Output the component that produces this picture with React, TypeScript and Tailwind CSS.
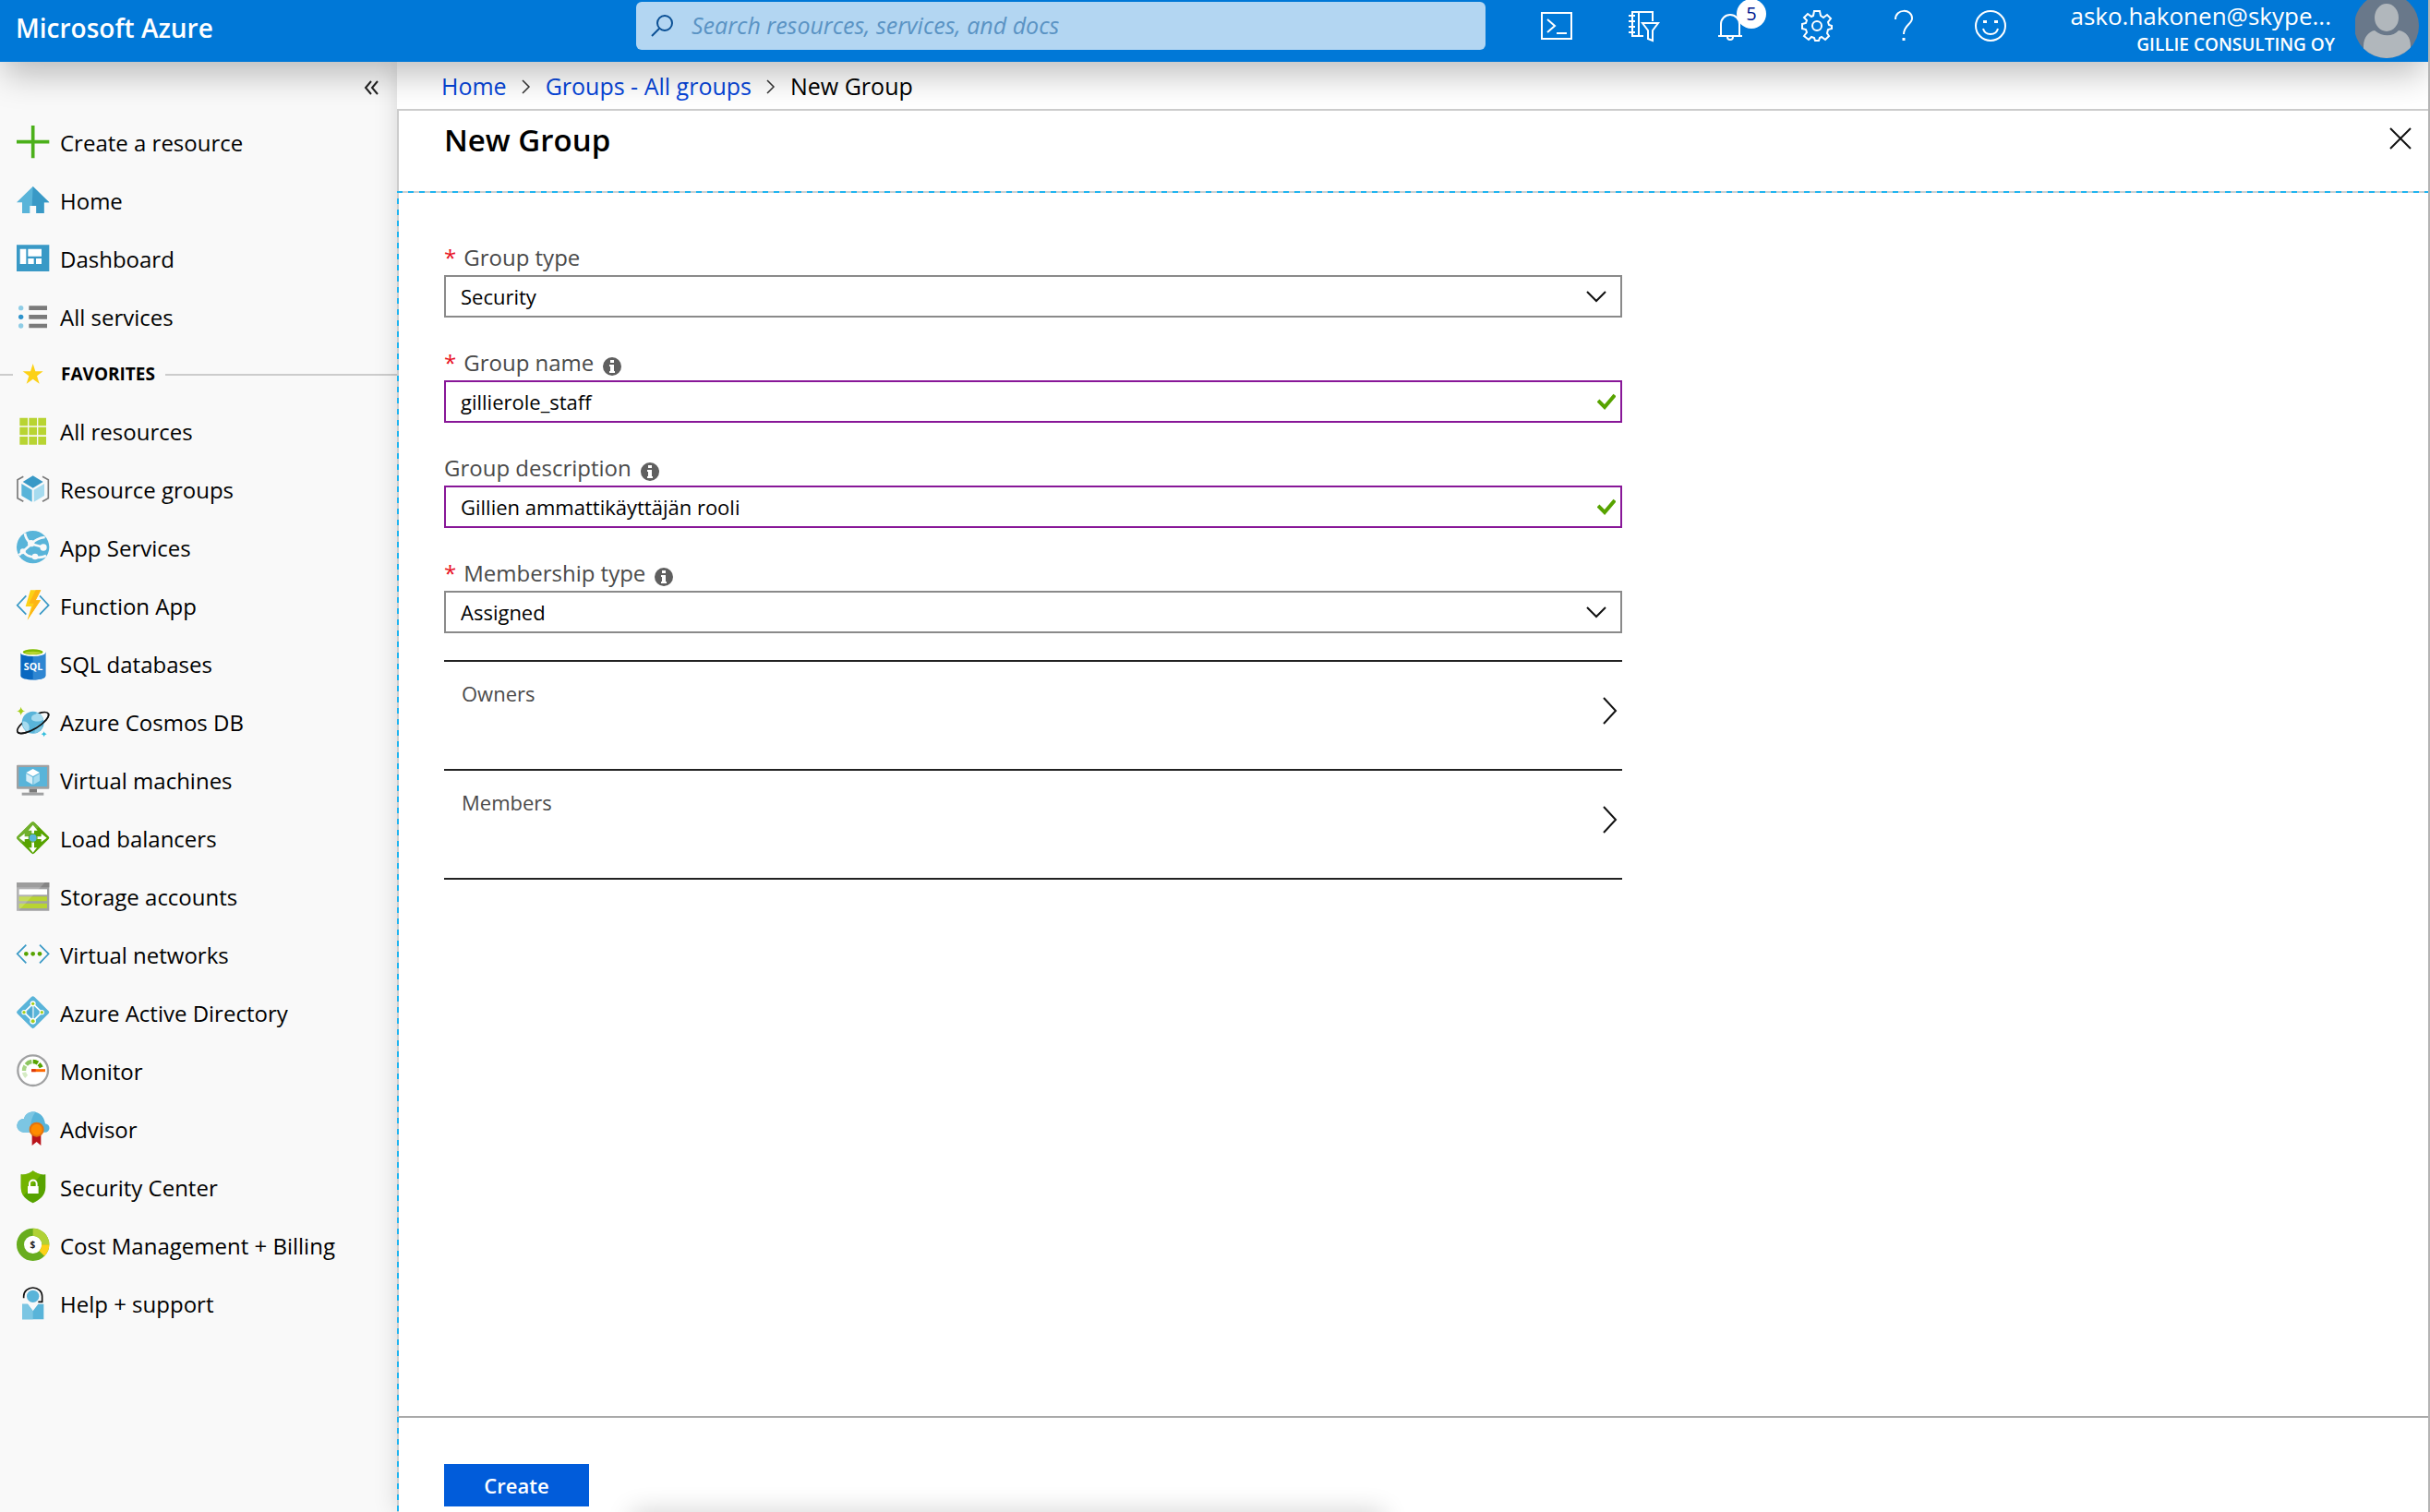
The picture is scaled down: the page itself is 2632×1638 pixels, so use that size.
import type { ReactNode } from 'react';
import clsx from 'clsx';

function NavSvg({ children }: { children: ReactNode }) {
  return (
    <svg viewBox="0 0 108 108" className="size-9 shrink-0 overflow-visible" fill="none" aria-hidden="true">
      {children}
    </svg>
  );
}

const icons = {
  plus: (
    <NavSvg>
      <path d="M0 50H106M53 -3V103" stroke="#4bb01a" strokeWidth="11" />
    </NavSvg>
  ),
  home: (
    <NavSvg>
      <path d="M53 6L106 58H89V93H64V69H43V93H18V58H0Z" fill="#59b4d9" />
      <path d="M53 6L106 58H89V93H64V69H50Z" fill="#3999c6" />
    </NavSvg>
  ),
  dashboard: (
    <NavSvg>
      <path d="M0 7H106V93H0Z" fill="#3999c6" />
      <path d="M11 20H31V69H11ZM37 20H81V44H37ZM37 51H56V69H37ZM63 51H81V69H63Z" fill="#fff" />
    </NavSvg>
  ),
  services: (
    <NavSvg>
      <circle cx="14" cy="23" r="8" fill="#8fcde6" />
      <circle cx="14" cy="52" r="8" fill="#2e93cc" />
      <circle cx="14" cy="81" r="8" fill="#8fcde6" />
      <path d="M40 23H99M40 52H99M40 81H99" stroke="#7a7a7a" strokeWidth="14" />
    </NavSvg>
  ),
  star: (
    <NavSvg>
      <path d="M53 18L61 43H86L66 58L74 83L53 68L32 83L40 58L20 43H45Z" fill="#fcd116" />
    </NavSvg>
  ),
  resources: (
    <NavSvg>
      <path
        d="M10 8h26v26h-26zM40 8h26v26h-26zM70 8h26v26h-26zM10 38h26v26h-26zM40 38h26v26h-26zM70 38h26v26h-26zM10 69h26v26h-26zM40 69h26v26h-26zM70 69h26v26h-26z"
        fill="#b8d432"
      />
    </NavSvg>
  ),
  groups: (
    <NavSvg>
      <path d="M53 7L86 27L53 47L20 27Z" fill="#3999c6" />
      <path d="M16 33L50 53V92L16 72Z" fill="#59b4d9" />
      <path d="M90 33L56 53V92L90 72Z" fill="#a6dbef" />
      <path d="M22 10L3 20V80L22 91M84 10L103 20V80L84 91" stroke="#7a7a7a" strokeWidth="5" />
    </NavSvg>
  ),
  app: (
    <NavSvg>
      <circle cx="53" cy="50" r="53" fill="#59b4d9" />
      <path
        d="M27 5C28 18 36 30 47 40M47 40C58 28 72 20 92 18M47 40L86 50M47 40C36 52 22 62 8 76M22 62C28 76 42 82 60 82M60 82C76 86 88 82 96 78"
        stroke="#f9f9f9"
        strokeWidth="8"
      />
      <circle cx="47" cy="38" r="11" fill="#f9f9f9" />
      <circle cx="87" cy="51" r="11" fill="#f9f9f9" />
      <circle cx="60" cy="81" r="10" fill="#f9f9f9" />
      <circle cx="20" cy="64" r="9" fill="#f9f9f9" />
    </NavSvg>
  ),
  fn: (
    <NavSvg>
      <path d="M31 19L2 50L31 80M75 19L104 50L75 80" stroke="#3999c6" strokeWidth="5" />
      <path d="M45 1H79L62 34H78L35 98L48 54H29Z" fill="#fcd116" />
      <path d="M79 1L62 34H78L35 98L56 44H40L62 1Z" fill="#fdb515" />
    </NavSvg>
  ),
  sql: (
    <NavSvg>
      <path d="M13 14V90C13 108 94 108 94 90V14Z" fill="#0a68c0" />
      <path d="M53 14V103C75 103 94 99 94 90V14Z" fill="#2f86d2" />
      <ellipse cx="53" cy="14" rx="41" ry="13" fill="#fff" />
      <ellipse cx="53" cy="13" rx="33" ry="9" fill="#7fba00" />
      <ellipse cx="53" cy="16" rx="26" ry="5" fill="#b8d432" />
      <text x="54" y="72" textAnchor="middle" fontSize="32" fontWeight="700" fill="#fff">
        SQL
      </text>
    </NavSvg>
  ),
  cosmos: (
    <NavSvg>
      <ellipse cx="53" cy="54" rx="58" ry="20" transform="rotate(-31 53 54)" stroke="#111" strokeWidth="5" />
      <circle cx="53" cy="53" r="36" fill="#59b4d9" />
      <path d="M48 40C48 26 62 30 66 22C78 24 86 36 87 44C76 52 48 52 48 40ZM20 50C34 46 48 62 38 84C26 78 18 66 20 50Z" fill="#a6dbef" />
      <path d="M62 66C72 58 82 62 84 70C78 80 66 88 58 88Z" fill="#7cc6e3" />
      <path d="M103 24A58 20 -31 0 1 3 84" stroke="#111" strokeWidth="5" />
      <path d="M14 2Q16 14 28 16Q16 18 14 30Q12 18 0 16Q12 14 14 2Z" fill="#a4cf1c" />
      <path d="M89 82Q90 90 98 91Q90 92 89 100Q88 92 80 91Q88 90 89 82Z" fill="#32bedd" />
    </NavSvg>
  ),
  vm: (
    <NavSvg>
      <rect y="2" width="106" height="78" rx="3" fill="#a0a1a2" />
      <path d="M7 9H99V72H7Z" fill="#59b4d9" />
      <path d="M53 15L75 27L53 39L31 27Z" fill="#fff" />
      <path d="M31 30L52 42V66L31 54Z" fill="#d6eef8" />
      <path d="M75 30L55 42V66L75 54Z" fill="#a6dbef" />
      <path d="M41 80H66V92H41Z" fill="#7a7a7a" />
      <path d="M17 92H88V101H17Z" fill="#a0a1a2" />
    </NavSvg>
  ),
  balancer: (
    <NavSvg>
      <path d="M48 0Q53 -5 58 0L104 46Q108 50 104 54L58 100Q53 105 48 100L2 54Q-2 50 2 46Z" fill="#57a300" />
      <path d="M48 0Q53 -5 58 0L72 14L16 68L2 54Q-2 50 2 46Z" fill="#71b02d" />
      <path d="M53 20V88M16 50H90" stroke="#fff" strokeWidth="8" />
      <path d="M53 8L68 26H38ZM53 98L66 82H40ZM8 50L26 36V64ZM98 50L80 36V64Z" fill="#fff" />
      <circle cx="53" cy="50" r="15" fill="#57a300" />
      <circle cx="53" cy="50" r="12" fill="#59b4d9" />
    </NavSvg>
  ),
  storage: (
    <NavSvg>
      <path d="M0 6H106V98H0Z" fill="#a0a1a2" />
      <path d="M0 6H106V22H0Z" fill="#858585" />
      <path d="M8 28H99V46H8Z" fill="#fff" />
      <path d="M8 52H99V67H8ZM8 74H99V90H8Z" fill="#b8d432" />
      <path d="M0 6H92L6 98H0Z" fill="#fff" fillOpacity="0.2" />
    </NavSvg>
  ),
  network: (
    <NavSvg>
      <path d="M31 20L2 49L31 79M75 20L104 49L75 79" stroke="#3999c6" strokeWidth="5" />
      <circle cx="31" cy="49" r="7" fill="#57a300" />
      <circle cx="53" cy="49" r="7" fill="#57a300" />
      <circle cx="75" cy="49" r="7" fill="#57a300" />
    </NavSvg>
  ),
  directory: (
    <NavSvg>
      <path d="M48 0Q53 -5 58 0L104 46Q108 50 104 54L58 100Q53 105 48 100L2 54Q-2 50 2 46Z" fill="#59b4d9" />
      <path d="M53 22L24 50L53 79L82 50ZM53 22V79" stroke="#fff" strokeWidth="5" />
      <path d="M53 30L34 50L53 70Z" fill="#3999c6" fillOpacity="0.5" />
      <circle cx="53" cy="22" r="9" fill="#fff" />
      <circle cx="24" cy="50" r="8" fill="#fff" />
      <circle cx="82" cy="50" r="8" fill="#fff" />
      <circle cx="53" cy="79" r="10" fill="#fff" />
      <circle cx="53" cy="22" r="5" fill="#a4cf1c" />
      <circle cx="24" cy="50" r="5" fill="#a4cf1c" />
      <circle cx="82" cy="50" r="5" fill="#a4cf1c" />
      <circle cx="53" cy="79" r="6" fill="#a4cf1c" />
    </NavSvg>
  ),
  monitor: (
    <NavSvg>
      <circle cx="53" cy="50" r="49" fill="#fff" stroke="#a0a1a2" strokeWidth="7" />
      <path d="M32 70A29 29 0 0 1 24 56" stroke="#d5ebc4" strokeWidth="13" />
      <path d="M24 51A29 29 0 0 1 28 35" stroke="#a8d686" strokeWidth="13" />
      <path d="M31 31A29 29 0 0 1 49 21" stroke="#8cc560" strokeWidth="13" />
      <path d="M53 21A29 29 0 0 1 69 26" stroke="#57a300" strokeWidth="13" />
      <path d="M72 29A29 29 0 0 1 80 40" stroke="#57a300" strokeWidth="13" />
      <path d="M49 50H93" stroke="#ff6a00" strokeWidth="9" />
      <path d="M48 50H62" stroke="#dd3b0e" strokeWidth="9" />
    </NavSvg>
  ),
  advisor: (
    <NavSvg>
      <path d="M22 62A22 22 0 0 1 24 18C30 -14 86 -14 93 34A14 14 0 0 1 92 62Z" fill="#59b4d9" />
      <path d="M22 62A22 22 0 0 1 24 18C30 0 44 -5 62 -5C48 14 42 38 48 62Z" fill="#7cc6e3" />
      <path d="M50 72H79V105L65 93L50 105Z" fill="#ba141a" />
      <circle cx="65" cy="53" r="24" fill="#e5730d" />
      <circle cx="65" cy="53" r="18" fill="#ff8c00" />
    </NavSvg>
  ),
  security: (
    <NavSvg>
      <path d="M53 -2C66 8 80 11 94 10V52C94 78 74 94 53 103C32 94 14 78 14 52V10C28 11 42 8 53 -2Z" fill="#57a300" />
      <path d="M53 -2C62 5 70 8 80 10L22 80C17 72 14 62 14 52V10C28 11 42 8 53 -2Z" fill="#7fba00" fillOpacity="0.7" />
      <path d="M36 48H71V72H36Z" fill="#fff" />
      <path d="M42 50V40A11 11 0 0 1 65 40V50" stroke="#fff" strokeWidth="6" />
    </NavSvg>
  ),
  cost: (
    <NavSvg>
      <circle cx="53" cy="49" r="41" fill="#fff" stroke="#68ad1e" strokeWidth="24" />
      <path d="M53 8A41 41 0 0 1 94 49" stroke="#b0d136" strokeWidth="24" />
      <path d="M94 49A41 41 0 0 1 82 78" stroke="#fcd116" strokeWidth="24" />
      <text x="52" y="60" textAnchor="middle" fontSize="30" fontWeight="700" fill="#1e1e1e">
        $
      </text>
    </NavSvg>
  ),
  help: (
    <NavSvg>
      <path d="M18 53H36L53 76L70 53H88V103H18Z" fill="#59b4d9" />
      <path d="M18 53H36L53 76V103H18Z" fill="#7cc6e3" />
      <circle cx="53" cy="28" r="20" fill="#59b4d9" />
      <path d="M23 34V28A30 28 0 0 1 83 28V46H70" stroke="#111" strokeWidth="5" />
    </NavSvg>
  ),
};

type IconName = keyof typeof icons;

const topLinks: { icon: IconName; label: string }[] = [
  { icon: 'plus', label: 'Create a resource' },
  { icon: 'home', label: 'Home' },
  { icon: 'dashboard', label: 'Dashboard' },
  { icon: 'services', label: 'All services' },
];

const favorites: { icon: IconName; label: string }[] = [
  { icon: 'resources', label: 'All resources' },
  { icon: 'groups', label: 'Resource groups' },
  { icon: 'app', label: 'App Services' },
  { icon: 'fn', label: 'Function App' },
  { icon: 'sql', label: 'SQL databases' },
  { icon: 'cosmos', label: 'Azure Cosmos DB' },
  { icon: 'vm', label: 'Virtual machines' },
  { icon: 'balancer', label: 'Load balancers' },
  { icon: 'storage', label: 'Storage accounts' },
  { icon: 'network', label: 'Virtual networks' },
  { icon: 'directory', label: 'Azure Active Directory' },
  { icon: 'monitor', label: 'Monitor' },
  { icon: 'advisor', label: 'Advisor' },
  { icon: 'security', label: 'Security Center' },
  { icon: 'cost', label: 'Cost Management + Billing' },
  { icon: 'help', label: 'Help + support' },
];

function NavLink({ icon, label }: { icon: IconName; label: string }) {
  return (
    <li>
      <a href="#" className="flex h-[63px] items-center gap-[11px] pl-[18px] text-2xl text-black">
        {icons[icon]}
        {label}
      </a>
    </li>
  );
}

function Sidebar() {
  return (
    <nav className="w-[430px] shrink-0 bg-[#f9f9f9]">
      <div className="flex h-14 items-center justify-end pr-5">
        <button type="button" aria-label="Collapse menu">
          <svg viewBox="0 0 16 16" className="size-4" fill="none" stroke="#222" strokeWidth="2" aria-hidden="true">
            <path d="M8 1L2 8L8 15M15 1L9 8L15 15" />
          </svg>
        </button>
      </div>
      <ul>
        {topLinks.map((link) => (
          <NavLink key={link.label} {...link} />
        ))}
      </ul>
      <div className="flex h-[61px] items-center">
        <span className="h-[2px] w-[14px] bg-[#cccccc]" />
        <span className="ml-1 mr-3">{icons.star}</span>
        <h2 className="mr-[11px] text-[19px] font-bold text-black">FAVORITES</h2>
        <span className="h-[2px] flex-1 bg-[#cccccc]" />
      </div>
      <ul>
        {favorites.map((link) => (
          <NavLink key={link.label} {...link} />
        ))}
      </ul>
    </nav>
  );
}

function HeaderButton({ label, children }: { label: string; children: ReactNode }) {
  return (
    <button type="button" aria-label={label} className="relative flex h-14 w-[94px] items-center justify-center">
      <svg viewBox="0 0 34 34" className="size-[34px] overflow-visible" fill="none" stroke="#fff" strokeWidth="2" aria-hidden="true">
        {children}
      </svg>
      {label === 'Notifications' && (
        <span className="absolute right-2 -top-px flex size-8 items-center justify-center rounded-full bg-white text-xl text-[#00188f]">
          5
        </span>
      )}
    </button>
  );
}

function Header() {
  return (
    <header className="relative z-20 flex h-[67px] shrink-0 items-start bg-[#0078d7] shadow-[0_18px_36px_-4px_rgba(0,0,0,0.25)]">
      <div className="flex w-[689px] shrink-0 items-center pl-[17px]">
        <a href="#" className="text-[28px] leading-[60px] font-semibold text-white">
          Microsoft Azure
        </a>
      </div>
      <div className="mt-[2px] flex h-[52px] max-w-[920px] flex-1 items-center gap-[20px] rounded-md bg-[#b3d6f2] pl-4">
        <svg viewBox="0 0 24 24" className="size-6 shrink-0" fill="none" stroke="#0a4f94" strokeWidth="2" aria-hidden="true">
          <circle cx="15" cy="9" r="8" />
          <path d="M9 15L1 23" />
        </svg>
        <input
          type="search"
          aria-label="Search"
          placeholder="Search resources, services, and docs"
          className="w-full bg-transparent text-[25px] italic outline-none placeholder:text-[#5a93c4]"
        />
      </div>
      <div className="ml-auto flex shrink-0">
        <HeaderButton label="Cloud Shell">
          <path d="M1 3H33V31H1Z" />
          <path d="M7 10L15 17L7 24M17 25H28" />
        </HeaderButton>
        <HeaderButton label="Directory and subscription filter">
          <path d="M17 28H5V2H27V12M1 6H8M1 12H8M1 18H8M1 24H8M12 2V28" />
          <path d="M16 14H33L27 22V33L22 31V22Z" fill="#0078d7" />
        </HeaderButton>
        <HeaderButton label="Notifications">
          <path d="M7 28V15A10 10 0 0 1 27 15V28M4 28H30M14 29A3 3 0 0 0 20 29" />
        </HeaderButton>
        <HeaderButton label="Settings">
          <path d="M14 1H20L21 6L24 8L28 5L32 9L29 13L30 16L33 17V20L29 21L28 25L30 28L26 32L22 29L20 30L19 33H15L14 30L11 29L8 32L3 28L6 24L5 21L1 20V15L5 14L6 11L3 8L7 4L11 7L13 6Z" />
          <circle cx="17" cy="17" r="5" />
        </HeaderButton>
        <HeaderButton label="Help">
          <path d="M8 10C8 -2 26 -2 26 9C26 15 17 16 17 26" />
          <path d="M17 30V33" strokeWidth="3" />
        </HeaderButton>
        <HeaderButton label="Feedback">
          <circle cx="17" cy="17" r="16" />
          <path d="M9 20C11 28 23 28 25 20" />
          <path d="M11 11V14M23 11V14" strokeWidth="4" />
        </HeaderButton>
      </div>
      <button type="button" className="ml-[26px] flex shrink-0 items-start justify-end gap-[22px] pr-[10px]">
        <span className="flex w-[300px] flex-col text-right text-white">
          <span className="pr-1 text-[26px] leading-[34px]">asko.hakonen@skype...</span>
          <span className="text-[19px] leading-7 font-semibold">GILLIE CONSULTING OY</span>
        </span>
        <svg viewBox="0 6 69 63" className="h-[63px] w-[69px]" aria-hidden="true">
          <clipPath id="avatar">
            <circle cx="34" cy="34" r="35" />
          </clipPath>
          <g clipPath="url(#avatar)">
            <path d="M-1 -1H70V70H-1Z" fill="#69788a" />
            <path d="M9 69V56C9 46 15 40 21 39C29 46 41 46 47 39C55 40 60 46 60 56V69Z" fill="#b1b7bc" />
            <ellipse cx="34" cy="25" rx="13" ry="15" fill="#b1b7bc" />
          </g>
        </svg>
      </button>
    </header>
  );
}

function Separator() {
  return (
    <svg viewBox="0 0 10 16" className="h-4 w-[10px]" fill="none" stroke="#333" strokeWidth="1.5" aria-hidden="true">
      <path d="M1 1L8 8L1 15" />
    </svg>
  );
}

function Label({ id, text, required, info }: { id: string; text: string; required?: boolean; info?: boolean }) {
  return (
    <label htmlFor={id} className="mb-[2px] flex h-[34px] items-center text-2xl text-[#4a4a4a]">
      {required && <span className="mr-2 text-[#e81123]">*</span>}
      {text}
      {info && (
        <svg viewBox="0 0 20 20" className="mt-2 ml-[10px] size-5" aria-hidden="true">
          <circle cx="10" cy="10" r="10" fill="#5f5f5f" />
          <path d="M8 3H12V6H8ZM7 8H12V15H13V17H7V15H8V10H7Z" fill="#fff" />
        </svg>
      )}
    </label>
  );
}

interface FieldProps {
  id: string;
  label: string;
  value: string;
  type: 'select' | 'text';
  required?: boolean;
  info?: boolean;
}

function Field({ id, label, value, type, required, info }: FieldProps) {
  const box = 'h-[46px] w-full appearance-none border-2 bg-white px-4 text-[22px] text-black outline-none';
  return (
    <div>
      <Label id={id} text={label} required={required} info={info} />
      <div className="relative">
        {type === 'select' ? (
          <select id={id} defaultValue={value} className={clsx(box, 'border-[#8a8a8a]')}>
            <option>{value}</option>
          </select>
        ) : (
          <input id={id} type="text" defaultValue={value} className={clsx(box, 'border-[#881798]')} />
        )}
        {type === 'select' ? (
          <svg viewBox="0 0 22 14" className="absolute top-4 right-[17px] h-[14px] w-[22px]" fill="none" stroke="#111" strokeWidth="2" aria-hidden="true">
            <path d="M1 2L11 12L21 2" />
          </svg>
        ) : (
          <svg viewBox="0 0 20 18" className="absolute top-[14px] right-[7px] h-[18px] w-5" fill="none" stroke="#57a300" strokeWidth="4" aria-hidden="true">
            <path d="M1 8L8 15L19 2" />
          </svg>
        )}
      </div>
    </div>
  );
}

function PickerRow({ label }: { label: string }) {
  return (
    <button type="button" className="flex h-[118px] w-full items-start justify-between border-t-2 border-[#222] pt-[18px] pr-[5px] pl-[19px]">
      <span className="text-[22px] leading-8 text-[#4a4a4a]">{label}</span>
      <svg viewBox="0 0 16 30" className="mt-5 h-[30px] w-4" fill="none" stroke="#111" strokeWidth="2" aria-hidden="true">
        <path d="M1 1L14 15L1 29" />
      </svg>
    </button>
  );
}

function Blade() {
  return (
    <main className="relative z-10 flex min-w-0 flex-1 flex-col bg-white shadow-[0_0_24px_rgba(0,0,0,0.15)]">
      <nav aria-label="Breadcrumb" className="flex h-[51px] items-center gap-4 pt-[3px] pl-12 text-[25px]">
        <a href="#" className="text-[#0645d8]">Home</a>
        <Separator />
        <a href="#" className="text-[#0645d8]">Groups - All groups</a>
        <Separator />
        <span className="text-black">New Group</span>
      </nav>
      <div className="flex h-[89px] items-start justify-between border-t-2 border-l-2 border-[#cccccc] pr-[18px] pl-[49px]">
        <h1 className="text-[33px] leading-[64px] font-semibold text-black">New Group</h1>
        <button type="button" aria-label="Close" className="mt-[18px]">
          <svg viewBox="0 0 24 24" className="size-6" fill="none" stroke="#111" strokeWidth="2" aria-hidden="true">
            <path d="M1 1L23 23M23 1L1 23" />
          </svg>
        </button>
      </div>
      <div className="h-[2px] bg-[repeating-linear-gradient(to_right,#1eb4f0_0_6px,#cfcfcf_6px_12px)]" />
      <div className="flex flex-1">
        <div className="w-[2px] bg-[repeating-linear-gradient(to_bottom,#cfcfcf_0_6px,#1eb4f0_6px_12px)]" />
        <form className="flex flex-1 flex-col" onSubmit={(e) => e.preventDefault()}>
          <div className="flex-1 pt-[53px] pr-12 pl-[49px]">
            <div className="flex max-w-[1276px] flex-col gap-8">
              <Field id="group-type" label="Group type" value="Security" type="select" required />
              <Field id="group-name" label="Group name" value="gillierole_staff" type="text" required info />
              <Field id="group-description" label="Group description" value="Gillien ammattikäyttäjän rooli" type="text" info />
              <Field id="membership-type" label="Membership type" value="Assigned" type="select" required info />
            </div>
            <div className="mt-[29px] max-w-[1276px] border-b-2 border-[#222]">
              <PickerRow label="Owners" />
              <PickerRow label="Members" />
            </div>
          </div>
          <div className="border-t-2 border-[#a9a9a9] pt-[50px] pb-[6px] pl-[49px]">
            <button type="submit" className="h-[46px] w-[157px] bg-[#015cda] text-[22px] font-semibold text-white">
              Create
            </button>
          </div>
        </form>
      </div>
    </main>
  );
}

export default function App() {
  return (
    <div className="relative flex h-screen flex-col overflow-hidden border-r-2 border-[#b4b4b4] bg-white font-['Open_Sans','Noto_Sans',sans-serif]">
      <Header />
      <div className="flex min-h-0 flex-1">
        <Sidebar />
        <Blade />
      </div>
      {/* soft shadow rising from the bottom edge */}
      <div className="pointer-events-none absolute top-full left-[26%] z-30 h-5 w-[31%] shadow-[0_0_28px_rgba(0,0,0,0.2)]" />
    </div>
  );
}
